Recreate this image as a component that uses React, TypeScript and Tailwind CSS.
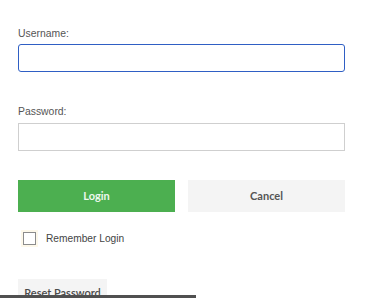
export default function App() {
  return (
    <div className="relative h-[298px] w-[369px] overflow-hidden bg-white">
      <form className="ml-[18px] flex w-[327px] flex-col pt-[27px]">
        <label className="h-[13px] text-[10.4px] leading-[13px] text-[#555] [font-family:'Liberation_Sans',Arial,sans-serif]">
          Username:
        </label>
        <input
          type="text"
          className="mt-[4px] h-[28px] w-full rounded-[3px] border-[1.5px] border-[#2f5fc4] bg-white outline-none"
        />
        <label className="mt-[33px] h-[13px] text-[10.4px] leading-[13px] text-[#555] [font-family:'Liberation_Sans',Arial,sans-serif]">
          Password:
        </label>
        <input
          type="password"
          className="mt-[5px] h-[28px] w-full border border-[#cfcfcf] bg-white outline-none"
        />
        <div className="mt-[29px] flex gap-[13px]">
          <button
            type="button"
            className="h-[32px] flex-1 bg-[#4caf50] text-[11px] font-bold text-[#eef8ee] [font-family:Lato,sans-serif]"
          >
            Login
          </button>
          <button
            type="button"
            className="h-[32px] flex-1 bg-[#f4f4f4] text-[11px] font-bold text-[#555] [font-family:Lato,sans-serif]"
          >
            Cancel
          </button>
        </div>
        <label className="mt-[20px] flex h-[13px] items-center gap-[10px] pl-[5px]">
          <span className="block h-[13px] w-[13px] border border-[#8c8c8c] bg-white shadow-[0_0_0_2px_#fdf8ea]" />
          <span className="text-[10.2px] text-[#444] [font-family:'Liberation_Sans',Arial,sans-serif]">
            Remember Login
          </span>
        </label>
        <div className="mt-[34px]">
          <button
            type="button"
            className="flex h-[30px] w-[89px] items-start justify-center bg-[#f4f4f4] pt-[7px] text-[11px] leading-[13px] font-semibold text-[#4a4a4a] [font-family:Lato,sans-serif]"
          >
            Reset Password
          </button>
        </div>
      </form>
      <div className="absolute bottom-0 left-0 h-[3px] w-[196px] bg-[#505050]" />
    </div>
  );
}
